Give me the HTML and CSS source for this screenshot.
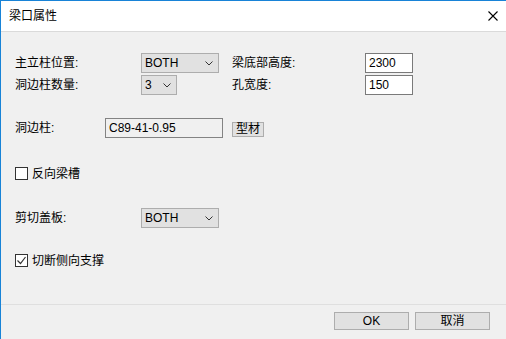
FILE: index.html
```html
<!DOCTYPE html>
<html lang="zh-CN">
<head>
    <meta charset="UTF-8">
    <title>梁口属性</title>
    <link rel="stylesheet" href="styles.css">
</head>
<body>
    <div class="window">
        <div class="titlebar">
            <span class="title">梁口属性</span>
            <svg class="close" width="10" height="10" viewBox="0 0 10 10">
                <path d="M0.5 0.5 L9.5 9.5 M9.5 0.5 L0.5 9.5" stroke="#000" stroke-width="1.1" fill="none"/>
            </svg>
        </div>

        <div class="content">
            <div class="fields">
                <span class="label">主立柱位置:</span>
                <div class="combo wide"><span>BOTH</span><svg class="chev" width="8" height="5" viewBox="0 0 8 5"><path d="M0.5 0.5 L4 4 L7.5 0.5" stroke="#333" fill="none"/></svg></div>
                <span class="label">梁底部高度:</span>
                <div class="edit">2300</div>

                <span class="label">洞边柱数量:</span>
                <div class="combo narrow"><span>3</span><svg class="chev" width="8" height="5" viewBox="0 0 8 5"><path d="M0.5 0.5 L4 4 L7.5 0.5" stroke="#333" fill="none"/></svg></div>
                <span class="label">孔宽度:</span>
                <div class="edit">150</div>
            </div>

            <div class="row section-pillar">
                <span class="label pillar-label">洞边柱:</span>
                <div class="edit readonly">C89-41-0.95</div>
                <button class="small-btn">型材</button>
            </div>

            <label class="check section-reverse">
                <span class="box"></span>
                <span>反向梁槽</span>
            </label>

            <div class="row section-cut">
                <span class="label cut-label">剪切盖板:</span>
                <div class="combo wide"><span>BOTH</span><svg class="chev" width="8" height="5" viewBox="0 0 8 5"><path d="M0.5 0.5 L4 4 L7.5 0.5" stroke="#333" fill="none"/></svg></div>
            </div>

            <label class="check section-brace">
                <span class="box"><svg width="11" height="11" viewBox="0 0 11 11"><path d="M1.5 5.5 L4.5 8.5 L9.5 2" stroke="#333" stroke-width="1.2" fill="none"/></svg></span>
                <span>切断侧向支撑</span>
            </label>
        </div>

        <div class="footer">
            <button class="dlg-btn">OK</button>
            <button class="dlg-btn">取消</button>
        </div>
    </div>
</body>
</html>
```

FILE: styles.css
```css
* {
    margin: 0;
    padding: 0;
    box-sizing: border-box;
}

body {
    font-family: "Liberation Sans", "Noto Sans CJK SC", sans-serif;
    font-size: 12px;
    color: #000;
    background: #f0f0f0;
}

.window {
    width: 506px;
    height: 339px;
    border-top: 1px solid #1883d7;
    border-left: 1px solid #1883d7;
    background: #f0f0f0;
    display: flex;
    flex-direction: column;
}

.titlebar {
    height: 31px;
    background: #fff;
    border-bottom: 1px solid #dadada;
    display: flex;
    align-items: center;
    justify-content: space-between;
    padding: 0 8px 1px 8px;
}

.title {
    font-size: 12px;
    line-height: 14px;
}

.close {
    display: block;
}

.content {
    flex: 1;
    padding: 21px 0 0 14px;
}

.label {
    line-height: 14px;
    white-space: nowrap;
}

.fields {
    display: grid;
    grid-template-columns: 126px 91px 133px 48px;
    grid-auto-rows: 20px;
    row-gap: 2px;
    align-items: center;
}

.combo {
    height: 20px;
    background: #e1e1e1;
    border: 1px solid #adadad;
    display: flex;
    align-items: center;
    justify-content: space-between;
    padding: 0 5px 0 3px;
    line-height: 14px;
}

.combo.wide {
    width: 78px;
}

.combo.narrow {
    width: 36px;
}

.chev {
    display: block;
}

.edit {
    height: 20px;
    background: #fff;
    border: 1px solid #7a7a7a;
    padding: 0 3px;
    display: flex;
    align-items: center;
    line-height: 14px;
}

.edit.readonly {
    width: 118px;
    background: #f0f0f0;
    border-color: #838383;
}

.row {
    display: flex;
    align-items: center;
}

.section-pillar {
    margin-top: 23px;
    height: 20px;
}

.pillar-label {
    width: 90px;
}

.small-btn {
    margin-left: 9px;
    width: 32px;
    height: 15px;
    background: #e1e1e1;
    border: 1px solid #adadad;
    font-family: inherit;
    font-size: 12px;
    line-height: 12px;
    margin-top: 2px;
}

.check {
    display: flex;
    align-items: center;
    gap: 4px;
    height: 13px;
    line-height: 14px;
}

.box {
    width: 13px;
    height: 13px;
    background: #fff;
    border: 1px solid #333;
    display: flex;
    align-items: center;
    justify-content: center;
}

.box svg {
    display: block;
}

.section-reverse {
    margin-top: 29px;
}

.section-cut {
    margin-top: 28px;
    height: 20px;
}

.cut-label {
    width: 126px;
}

.section-brace {
    margin-top: 26px;
}

.footer {
    height: 35px;
    border-top: 1px solid #dfdfdf;
    display: flex;
    justify-content: flex-end;
    align-items: flex-start;
    gap: 6px;
    padding: 7px 16px 0 0;
}

.dlg-btn {
    width: 75px;
    height: 18px;
    background: #e1e1e1;
    border: 1px solid #adadad;
    font-family: inherit;
    font-size: 12px;
    line-height: 14px;
    color: #000;
}
```
